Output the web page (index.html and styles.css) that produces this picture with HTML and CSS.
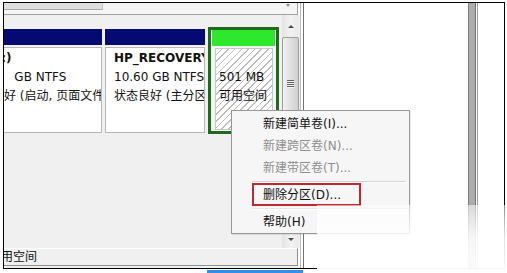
FILE: index.html
```html
<!DOCTYPE html>
<html lang="zh-CN">
<head>
<meta charset="utf-8">
<title>磁盘管理</title>
<link rel="stylesheet" href="styles.css">
</head>
<body>
<div class="frame">
  <div class="left">
    <div class="topbox">
      <div class="hscroll">
        <div class="hthumb"></div>
        <div class="htrack"><span class="tick"></span></div>
      </div>
    </div>
    <div class="disks">
      <div class="view">
        <div class="parts">
          <div class="part p1">
            <div class="hdr navy"></div>
            <div class="pbody"><b>OS(C:)</b><br>18.56&emsp;GB NTFS<br>状态良好 (启动, 页面文件, 故障转储, 主分区)</div>
          </div>
          <div class="part p2">
            <div class="hdr navy"></div>
            <div class="pbody"><b>HP_RECOVERY</b><br>10.60 GB NTFS<br>状态良好 (主分区)</div>
          </div>
          <div class="part sel">
            <div class="hdr green"></div>
            <div class="pbody hatch">&nbsp;<br>501 MB<br>可用空间</div>
          </div>
        </div>
      </div>
      <div class="vscroll">
        <div class="vbtn up"><span class="tri-up"></span></div>
        <div class="vthumb"><span class="grip"></span></div>
        <div class="vspace"></div>
        <div class="vbtn down"><span class="tri-down"></span></div>
      </div>
    </div>
    <div class="legend"><span class="legend-text">可用空间</span></div>
    <div class="bottomfill"></div>
  </div>
  <div class="gapcol"></div>
  <div class="right"><div class="splitter"></div></div>
</div>
<div class="taskbar"><div class="blue"></div></div>

<div class="menu">
  <div class="item">新建简单卷(I)...</div>
  <div class="item disabled">新建跨区卷(N)...</div>
  <div class="item disabled">新建带区卷(T)...</div>
  <div class="msep"></div>
  <div class="item">删除分区(D)...</div>
  <div class="msep faint"></div>
  <div class="item">帮助(H)</div>
</div>
<div class="redbox"></div>
<div class="fade"></div>
</body>
</html>
```
FILE: styles.css
```css
* { box-sizing: border-box; }
html, body { margin: 0; padding: 0; background: #fff; }
body {
  width: 507px;
  height: 273px;
  overflow: hidden;
  position: relative;
  font-family: "DejaVu Sans", "Noto Sans CJK SC", sans-serif;
  font-size: 12px;
  color: #111;
}

.frame {
  margin: 2px 0 0 3px;
  width: 502px;
  height: 267px;
  border: 1px solid #000;
  display: flex;
}

.left {
  width: 297px;
  border-right: 1px solid #bdbdbd;
  display: flex;
  flex-direction: column;
  background: #fff;
}

.topbox {
  width: 294px;
  height: 12px;
  border-right: 1px solid #a0a0a0;
  border-bottom: 1px solid #a0a0a0;
  background: #f6f6f6;
}
.hscroll { display: flex; height: 7px; }
.hthumb {
  width: 99px;
  background: #dedede;
  border-bottom: 1px solid #a9a9a9;
  border-right: 1px solid #c4c4c4;
}
.htrack { flex: 1; background: #f3f3f3; position: relative; }
.tick {
  position: absolute;
  left: 183px;
  top: 1px;
  width: 0; height: 0;
  border-left: 2px solid transparent;
  border-right: 2px solid transparent;
  border-top: 3px solid #8a8a8a;
}

.disks {
  height: 233px;
  display: flex;
  background: #f0f0f0;
}
.view {
  width: 278px;
  overflow: hidden;
}
.parts {
  display: flex;
  align-items: flex-start;
  gap: 3px;
  margin-left: -44px;
  padding-top: 14px;
}
.part { flex: none; }
.p1 { width: 142px; }
.p2 { width: 100px; }
.p2 .pbody { padding-left: 8px; }
.hdr { height: 16px; }
.navy { background: #050a72; }
.green { background: #2ee82e; }
.pbody {
  margin-top: 2px;
  height: 86px;
  border: 1px solid #b7b7b7;
  background: #fff;
  padding: 1px 7px 0;
  line-height: 19px;
  white-space: nowrap;
  overflow: hidden;
}
.pbody b { font-weight: bold; }

.sel {
  width: 71px;
  margin-top: -2px;
  border: 3px solid #1f6a20;
  padding: 0 1px 1px;
  background: #f4f4f4;
}
.sel .pbody {
  height: 82px;
  margin: 2px 2px 0 3px;
  padding: 0 3px;
  border-color: #c8c8c8;
}
.hatch {
  background: repeating-linear-gradient(135deg, #fff 0 3.6px, #bdbdbd 3.6px 4.7px);
}

.vscroll {
  width: 17px;
  margin-right: 1px;
  display: flex;
  flex-direction: column;
  background: linear-gradient(to right, #e4e4e4, #f2f2f2 50%, #e9e9e9);
}
.vbtn {
  display: flex;
  align-items: center;
  justify-content: center;
}
.vbtn.up { height: 21px; padding-top: 1px; }
.vbtn.down { height: 17px; }
.tri-up, .tri-down {
  width: 0; height: 0;
  border-left: 3px solid transparent;
  border-right: 3px solid transparent;
}
.tri-up { border-bottom: 3px solid #4a4a4a; }
.tri-down { border-top: 3px solid #4a4a4a; }
.vthumb {
  height: 93px;
  margin: 1px 0 0 0;
  border: 1px solid #9c9c9c;
  border-radius: 2px;
  background: linear-gradient(to right, #f1f1f1, #dcdcdc 60%, #d0d0d0);
  display: flex;
  align-items: center;
  justify-content: center;
}
.grip {
  width: 7px;
  height: 8px;
  background: repeating-linear-gradient(to bottom, #5e5e5e 0 1px, #f8f8f8 1px 2px);
}
.vspace { flex: 1; }

.legend {
  height: 18px;
  width: 294px;
  border-top: 1px solid #fff;
  border-bottom: 1px solid #8e8e8e;
  border-right: 1px solid #8e8e8e;
  background: #f0f0f0;
  overflow: hidden;
  white-space: nowrap;
  line-height: 16px;
}
.legend-text { display: inline-block; margin-left: -15px; }
.bottomfill { flex: 1; background: #f0f0f0; }

.gapcol {
  width: 3px;
  border-right: 1px solid #727272;
  background: #fff;
}
.right {
  flex: 1;
  background: #fff;
  display: flex;
}
.splitter {
  margin-left: 164px;
  width: 10px;
  background: linear-gradient(to right, #7c7c7c 0 1px, #acacac 1px 7px, #6f6f6f 7px 8px, #fff 8px 9px, #9a9a9a 9px 10px);
}

.taskbar { height: 4px; margin-top: 1px; }
.blue { margin-left: 207px; width: 96px; height: 4px; background: #3390ea; }

.menu {
  position: absolute;
  left: 231px;
  top: 110px;
  width: 179px;
  height: 124px;
  border: 1px solid #979797;
  background: #f6f6f6;
  padding-top: 2px;
  box-shadow: 1px 1px 1px rgba(0,0,0,0.08);
}
.item {
  height: 22px;
  line-height: 22px;
  padding-left: 31px;
  color: #111;
  white-space: nowrap;
}
.item.disabled { color: #8f8f8f; }
.msep {
  height: 5px;
  margin: 0 3px 0 20px;
  position: relative;
}
.msep::after {
  content: "";
  position: absolute;
  left: 0; right: 0; top: 2px;
  border-top: 1px solid #d4d4d4;
  border-bottom: 1px solid #fff;
}
.msep.faint::after { border-top-color: #e6e6e6; }

.redbox {
  position: absolute;
  left: 252px;
  top: 183px;
  width: 109px;
  height: 23px;
  border: 2px solid #c2272d;
}
.fade {
  position: absolute;
  left: 317px;
  top: 205px;
  right: 0;
  bottom: 0;
  background: linear-gradient(to bottom, rgba(255,255,255,0.55), rgba(255,255,255,0.88) 45%, rgba(255,255,255,0.97));
}
```
